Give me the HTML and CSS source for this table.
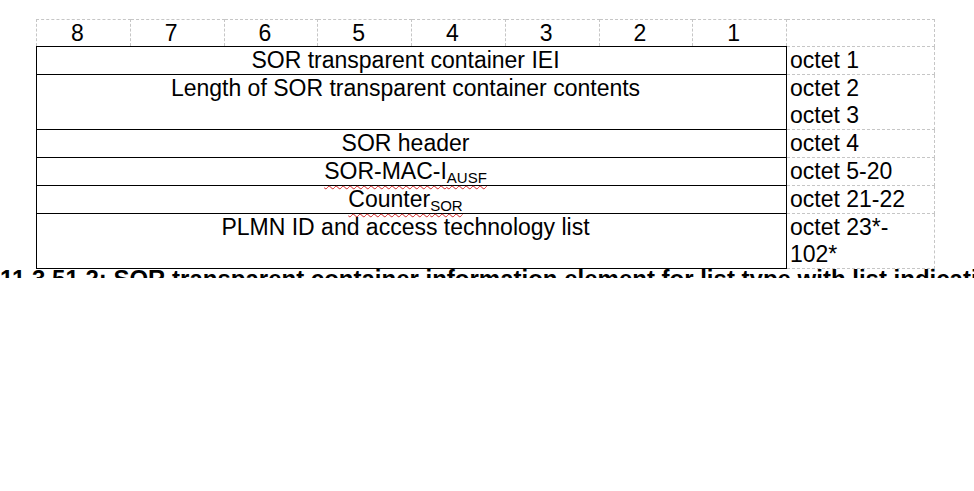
FILE: index.html
```html
<!DOCTYPE html>
<html lang="en">
<head>
<meta charset="utf-8">
<title>SOR transparent container</title>
<link rel="stylesheet" href="styles.css">
</head>
<body>
<div class="page">
  <table class="ie">
    <colgroup>
      <col class="bit"><col class="bit"><col class="bit"><col class="bit">
      <col class="bit"><col class="bit"><col class="bit"><col class="bit">
      <col class="octcol">
    </colgroup>
    <tr class="bits">
      <td>8</td><td>7</td><td>6</td><td>5</td><td>4</td><td>3</td><td>2</td><td>1</td><td class="blank"></td>
    </tr>
    <tr>
      <td class="field" colspan="8">SOR transparent container IEI</td>
      <td class="oct">octet 1</td>
    </tr>
    <tr>
      <td class="field" colspan="8">Length of SOR transparent container contents</td>
      <td class="oct">octet 2<br>octet 3</td>
    </tr>
    <tr>
      <td class="field" colspan="8">SOR header</td>
      <td class="oct">octet 4</td>
    </tr>
    <tr>
      <td class="field" colspan="8"><span class="spell">SOR-MAC-I<sub>AUSF</sub></span></td>
      <td class="oct">octet 5-20</td>
    </tr>
    <tr>
      <td class="field" colspan="8"><span class="spell">Counter<sub>SOR</sub></span></td>
      <td class="oct">octet 21-22</td>
    </tr>
    <tr>
      <td class="field" colspan="8">PLMN ID and access technology list</td>
      <td class="oct">octet 23*-<br>102*</td>
    </tr>
  </table>
  <div class="caption">Figure 9.11.3.51.2: SOR transparent container information element for list type with list indication</div>
</div>
</body>
</html>
```

FILE: styles.css
```css
html, body {
  margin: 0;
  padding: 0;
  background: #ffffff;
}

body {
  font-family: "Liberation Sans", Arial, sans-serif;
  font-size: 23px;
  color: #000000;
}

.page {
  padding: 19px 0 0 0;
  overflow: hidden;
}

.ie {
  margin-left: 36px;
  border-collapse: collapse;
  table-layout: fixed;
  width: 898px;
}

.bit {
  width: 93.75px;
}

.octcol {
  width: 148px;
}

.ie td {
  padding: 0;
  line-height: 27px;
  vertical-align: top;
}

.bits td {
  border: 1px dashed #c6c6c6;
  text-align: center;
  line-height: 26px;
  padding-right: 12px;
}

.bits td.blank {
  padding-right: 0;
}

.field {
  border: 1px solid #000000;
  text-align: center;
  padding-right: 12px !important;
}

.oct {
  border: 1px dashed #c6c6c6;
  text-align: left;
  padding-left: 3px !important;
}

sub {
  font-size: 15px;
  line-height: 0;
  vertical-align: -4px;
}

.spell {
  text-decoration: underline wavy #d02020;
  text-decoration-thickness: 1px;
  text-underline-offset: 6px;
}

.caption {
  height: 9px;
  overflow: hidden;
  white-space: nowrap;
  font-weight: bold;
  font-size: 24px;
  line-height: 20px;
  text-indent: -100px;
}
```
